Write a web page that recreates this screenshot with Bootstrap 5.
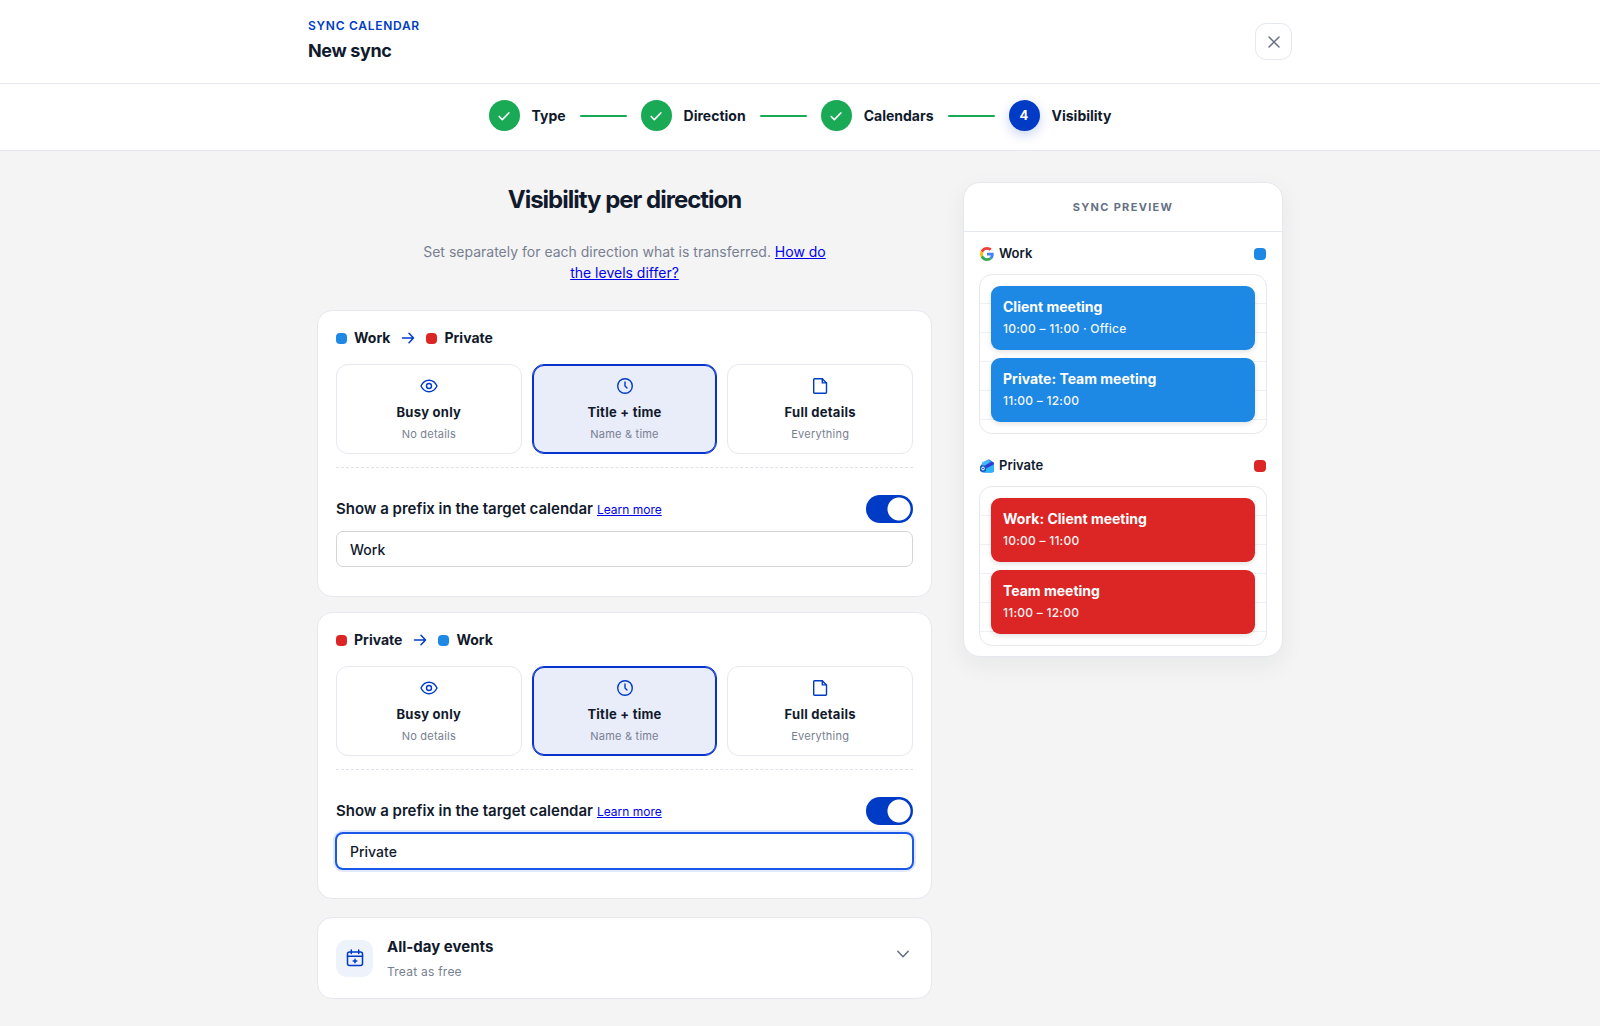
<!DOCTYPE html>
<html lang="en">
<head>
<meta charset="utf-8">
<meta name="viewport" content="width=device-width, initial-scale=1">
<title>New sync</title>
<link href="https://cdn.jsdelivr.net/npm/bootstrap@5.3.0/dist/css/bootstrap.min.css" rel="stylesheet">
<style>
  :root {
    --ink: #111a2c;
    --muted: #778091;
    --line: #e6e8ef;
    --brand: #003bc6;
    --done: #1aa955;
    --work: #1e88e5;
    --private: #dc2626;
  }
  body { font-family: Inter, "Liberation Sans", sans-serif; color: var(--ink); background: #f4f4f4; font-size: 14px; }
  svg { flex: none; display: block; }
  .stroke-icon { fill: none; stroke: currentColor; stroke-linecap: round; stroke-linejoin: round; }

  .top-inner { max-width: 1032px; padding: 18px 24px; }
  .eyebrow { color: var(--brand); font-size: 12px; line-height: 16px; font-weight: 600; letter-spacing: .06em; }
  .page-name { font-size: 18px; line-height: 28px; font-weight: 700; letter-spacing: -.02em; margin: 3px 0 0; }
  .top-bar, .step-bar { background: #fff; border-bottom: 1px solid var(--line); }
  .btn-close-x { width: 37px; height: 37px; padding: 0; border: 1px solid var(--line); border-radius: 11px; background: #fff; color: #667085; }

  .step-bar ol { padding: 16px 0 19px; }
  .step-dot { width: 31px; height: 31px; border-radius: 50%; background: var(--done); color: #fff; font-weight: 700; font-size: 13px; }
  .step-dot.now { background: var(--brand); box-shadow: 0 4px 12px rgba(0, 59, 198, .22); }
  .step-name { font-size: 14px; line-height: 20px; font-weight: 700; margin-left: 12px; }
  .step-line { width: 47px; height: 2px; border-radius: 1px; background: var(--done); margin: 0 14px; }

  .page-body { max-width: 998px; padding: 31px 16px 27px; gap: 31px; }
  .settings-col { flex: 1 1 0; min-width: 0; }
  .preview-col { flex: 0 0 320px; }
  .section-title { font-size: 24px; line-height: 36px; font-weight: 700; letter-spacing: -1px; margin: 0 0 23px; }
  .section-text { max-width: 424px; font-size: 14px; line-height: 21px; color: var(--muted); margin: 0 auto 27px; }
  .plain-link { color: #0000ee; text-decoration: underline; }

  .panel { background: #fff; border: 1px solid var(--line); border-radius: 15px; }
  .direction-panel { padding: 18px 18px 29px; margin-bottom: 15px; }
  .route { font-size: 14px; line-height: 18px; font-weight: 700; gap: 7px; margin-bottom: 17px; }
  .route svg { color: var(--brand); margin: 0 4px; }
  .swatch { width: 11px; height: 11px; border-radius: 4px; flex: none; }
  .swatch-lg { width: 12px; height: 12px; }
  .c-work { background: var(--work); }
  .c-private { background: var(--private); }

  .levels { gap: 10px; }
  .level { flex: 1 1 0; height: 90px; border: 1px solid var(--line); border-radius: 12px; cursor: pointer; padding-top: 12px; }
  .level svg { color: var(--brand); }
  .level-name, .level-info, .event-time, .all-day-info { letter-spacing: .02em; }
  .level-name { font-size: 13px; line-height: 18px; font-weight: 700; margin-top: 8px; }
  .level-info { font-size: 11px; line-height: 16px; color: var(--muted); margin-top: 5px; }
  .btn-check:checked + .level { background: #e9ecf9; border-color: #0a33cb; box-shadow: inset 0 0 0 1px #0a33cb; }
  .dashes { margin-top: 13px; border-top: 1px dashed #dfe2e8; padding-top: 27px; }
  .prefix-row { height: 28px; margin-bottom: 8px; }
  .prefix-row label { font-size: 15px; font-weight: 600; }
  .prefix-row a { font-size: 12px; }
  .form-switch .toggle { width: 47px; height: 28px; margin: 0; float: none; border: 0; border-radius: 14px;
    background: radial-gradient(circle at 33px 14px, #fff 11px, transparent 12px) var(--brand); cursor: pointer; }
  .prefix-input { height: 36px; border: 1px solid #d3d5d9; border-radius: 7px; padding: 0 13px; font-size: 14px; font-weight: 500; color: var(--ink); box-shadow: none; }
  .prefix-input.editing, .prefix-input:focus { border-color: #1a59e8; color: var(--ink); box-shadow: 0 0 0 1px #1a59e8, 0 0 0 3px rgba(26, 89, 232, .13); }

  .all-day { padding: 18px; margin-top: 18px; width: 100%; height: 82px; color: var(--ink); text-align: left; }
  .all-day-icon { width: 37px; height: 37px; border-radius: 11px; background: #edf2fb; color: var(--brand); margin-right: 14px; }
  .all-day-name { font-size: 15px; line-height: 22px; font-weight: 700; }
  .all-day-info { font-size: 12px; line-height: 18px; color: var(--muted); margin-top: 5px; }
  .all-day .chevron { color: #667085; }

  .preview { border-radius: 17px; box-shadow: 0 8px 24px rgba(17, 26, 44, .06); padding-bottom: 10px; }
  .preview-head { height: 49px; border-bottom: 1px solid var(--line); color: #667085; font-size: 11px; font-weight: 700; letter-spacing: .12em; }
  .preview-part { padding: 12px 15px 0; }
  .preview-part + .preview-part { padding-top: 22px; }
  .cal-head { height: 20px; padding: 0 1px; margin-bottom: 10px; gap: 5px; font-size: 13px; font-weight: 600; }
  .day-grid { border: 1px solid var(--line); border-radius: 13px; padding: 11px; gap: 8px;
    background: repeating-linear-gradient(#fff 0 28px, #eff0f4 28px 29px); }
  .event { height: 64px; border-radius: 9px; padding: 11px 12px; color: #fff; box-shadow: 0 2px 5px rgba(17, 26, 44, .12); }
  .event-name { font-size: 14px; line-height: 20px; font-weight: 700; }
  .event-time { font-size: 12px; line-height: 16px; font-weight: 500; margin-top: 4px; opacity: .95; }

  @media (max-width: 900px) {
    .page-body { flex-direction: column; }
    .settings-col, .preview-col { flex: none; width: 100%; }
    .step-line { width: 16px; margin: 0 6px; }
  }
</style>
</head>
<body>
<svg width="0" height="0" class="position-absolute" aria-hidden="true">
  <defs>
    <symbol id="i-check" viewBox="0 0 16 16"><path d="M2.500 8.500l3.600 3.600 7.400-7.600"/></symbol>
    <symbol id="i-eye" viewBox="0 0 18 18"><path d="M1 9C2.800 5.200 5.600 3.300 9 3.300S15.200 5.200 17 9c-1.800 3.800-4.600 5.700-8 5.700S2.800 12.800 1 9z"/><circle cx="9" cy="9" r="2.500"/></symbol>
    <symbol id="i-clock" viewBox="0 0 18 18"><circle cx="9" cy="9" r="7.300"/><path d="M9 5v4l2 2"/></symbol>
    <symbol id="i-file" viewBox="0 0 18 18"><path d="M3.500 1.700h7.800l4.200 4.200v9.600a.8.8 0 0 1-.8.800H3.500a.8.8 0 0 1-.8-.8v-13a.8.8 0 0 1 .8-.8z"/><path d="M11.300 1.700v4.200h4.200"/></symbol>
    <symbol id="i-arrow" viewBox="0 0 14 14"><path d="M1.500 7h11M8 2.300L12.500 7 8 11.700"/></symbol>
  </defs>
</svg>

<header class="top-bar">
  <div class="top-inner mx-auto d-flex justify-content-between align-items-center">
    <div>
      <div class="eyebrow">SYNC CALENDAR</div>
      <h1 class="page-name">New sync</h1>
    </div>
    <button type="button" class="btn-close-x d-flex align-items-center justify-content-center" aria-label="Close">
      <svg class="stroke-icon" width="12" height="12" viewBox="0 0 12 12" stroke-width="1.500"><path d="M1 1l10 10M11 1L1 11"/></svg>
    </button>
  </div>
</header>

<nav class="step-bar" aria-label="Steps">
  <ol class="list-unstyled m-0 d-flex justify-content-center align-items-center">
    <li class="d-flex align-items-center"><span class="step-dot d-flex align-items-center justify-content-center"><svg class="stroke-icon" width="14" height="14" stroke-width="1.800"><use href="#i-check"/></svg></span><span class="step-name">Type</span><span class="step-line"></span></li>
    <li class="d-flex align-items-center"><span class="step-dot d-flex align-items-center justify-content-center"><svg class="stroke-icon" width="14" height="14" stroke-width="1.800"><use href="#i-check"/></svg></span><span class="step-name">Direction</span><span class="step-line"></span></li>
    <li class="d-flex align-items-center"><span class="step-dot d-flex align-items-center justify-content-center"><svg class="stroke-icon" width="14" height="14" stroke-width="1.800"><use href="#i-check"/></svg></span><span class="step-name">Calendars</span><span class="step-line"></span></li>
    <li class="d-flex align-items-center" aria-current="step"><span class="step-dot now d-flex align-items-center justify-content-center">4</span><span class="step-name">Visibility</span></li>
  </ol>
</nav>

<main class="page-body mx-auto d-flex align-items-start">
  <div class="settings-col">
    <h2 class="section-title text-center">Visibility per direction</h2>
    <p class="section-text text-center">Set separately for each direction what is transferred. <a class="plain-link" href="#">How do the levels differ?</a></p>

    <section class="panel direction-panel">
      <div class="route d-flex align-items-center">
        <span class="swatch c-work"></span><span>Work</span>
        <svg class="stroke-icon" width="14" height="14" stroke-width="1.500"><use href="#i-arrow"/></svg>
        <span class="swatch c-private"></span><span>Private</span>
      </div>
      <div class="levels d-flex text-center">
        <input class="btn-check" type="radio" name="level-a" id="a-busy">
        <label class="level d-flex flex-column align-items-center" for="a-busy"><svg class="stroke-icon" width="18" height="18" stroke-width="1.400"><use href="#i-eye"/></svg><span class="level-name">Busy only</span><span class="level-info">No details</span></label>
        <input class="btn-check" type="radio" name="level-a" id="a-title" checked>
        <label class="level d-flex flex-column align-items-center" for="a-title"><svg class="stroke-icon" width="18" height="18" stroke-width="1.400"><use href="#i-clock"/></svg><span class="level-name">Title + time</span><span class="level-info">Name &amp; time</span></label>
        <input class="btn-check" type="radio" name="level-a" id="a-full">
        <label class="level d-flex flex-column align-items-center" for="a-full"><svg class="stroke-icon" width="18" height="18" stroke-width="1.400"><use href="#i-file"/></svg><span class="level-name">Full details</span><span class="level-info">Everything</span></label>
      </div>
      <div class="dashes">
        <div class="prefix-row d-flex align-items-center justify-content-between">
          <div><label for="a-switch">Show a prefix in the target calendar</label> <a class="plain-link" href="#">Learn more</a></div>
          <div class="form-switch p-0 m-0 d-flex"><input class="form-check-input toggle" type="checkbox" role="switch" id="a-switch" checked></div>
        </div>
        <input class="form-control prefix-input" type="text" value="Work" aria-label="Prefix for events from Work">
      </div>
    </section>

    <section class="panel direction-panel">
      <div class="route d-flex align-items-center">
        <span class="swatch c-private"></span><span>Private</span>
        <svg class="stroke-icon" width="14" height="14" stroke-width="1.500"><use href="#i-arrow"/></svg>
        <span class="swatch c-work"></span><span>Work</span>
      </div>
      <div class="levels d-flex text-center">
        <input class="btn-check" type="radio" name="level-b" id="b-busy">
        <label class="level d-flex flex-column align-items-center" for="b-busy"><svg class="stroke-icon" width="18" height="18" stroke-width="1.400"><use href="#i-eye"/></svg><span class="level-name">Busy only</span><span class="level-info">No details</span></label>
        <input class="btn-check" type="radio" name="level-b" id="b-title" checked>
        <label class="level d-flex flex-column align-items-center" for="b-title"><svg class="stroke-icon" width="18" height="18" stroke-width="1.400"><use href="#i-clock"/></svg><span class="level-name">Title + time</span><span class="level-info">Name &amp; time</span></label>
        <input class="btn-check" type="radio" name="level-b" id="b-full">
        <label class="level d-flex flex-column align-items-center" for="b-full"><svg class="stroke-icon" width="18" height="18" stroke-width="1.400"><use href="#i-file"/></svg><span class="level-name">Full details</span><span class="level-info">Everything</span></label>
      </div>
      <div class="dashes">
        <div class="prefix-row d-flex align-items-center justify-content-between">
          <div><label for="b-switch">Show a prefix in the target calendar</label> <a class="plain-link" href="#">Learn more</a></div>
          <div class="form-switch p-0 m-0 d-flex"><input class="form-check-input toggle" type="checkbox" role="switch" id="b-switch" checked></div>
        </div>
        <input class="form-control prefix-input editing" type="text" value="Private" aria-label="Prefix for events from Private">
      </div>
    </section>

    <button type="button" class="panel all-day d-flex align-items-center" aria-expanded="false">
      <span class="all-day-icon d-flex align-items-center justify-content-center">
        <svg class="stroke-icon" width="18" height="18" viewBox="0 0 18 18" stroke-width="1.500"><rect x="1.500" y="3" width="15" height="13.500" rx="2"/><path d="M1.500 7.300h15M5.300 1v3.500M12.700 1v3.500M9 10.200v3.600M7.200 12h3.600"/></svg>
      </span>
      <span class="d-flex flex-column flex-grow-1"><span class="all-day-name">All-day events</span><span class="all-day-info">Treat as free</span></span>
      <svg class="stroke-icon chevron mb-2 me-1" width="12" height="12" viewBox="0 0 12 12" stroke-width="1.500"><path d="M.8 3.300L6 8.700l5.200-5.400"/></svg>
    </button>
  </div>

  <aside class="preview-col">
    <div class="panel preview">
      <div class="preview-head d-flex align-items-center justify-content-center">SYNC PREVIEW</div>
      <section class="preview-part">
        <div class="cal-head d-flex align-items-center">
          <svg width="14" height="14" viewBox="0 0 48 48" aria-hidden="true"><path fill="#EA4335" d="M24 9.500c3.540 0 6.710 1.220 9.210 3.600l6.850-6.850C35.900 2.380 30.470 0 24 0 14.620 0 6.510 5.380 2.560 13.220l7.980 6.190C12.430 13.720 17.740 9.500 24 9.500z"/><path fill="#4285F4" d="M46.980 24.550c0-1.570-.15-3.090-.38-4.550H24v9.020h12.940c-.58 2.960-2.260 5.480-4.780 7.180l7.730 6c4.510-4.180 7.090-10.360 7.090-17.650z"/><path fill="#FBBC05" d="M10.530 28.590c-.48-1.450-.76-2.990-.76-4.590s.27-3.140.76-4.590l-7.980-6.190C.92 16.460 0 20.120 0 24c0 3.880.92 7.540 2.560 10.780l7.970-6.190z"/><path fill="#34A853" d="M24 48c6.480 0 11.930-2.130 15.890-5.810l-7.730-6c-2.150 1.450-4.920 2.300-8.160 2.300-6.260 0-11.570-4.220-13.470-9.910l-7.980 6.190C6.510 42.620 14.620 48 24 48z"/></svg>
          <span class="flex-grow-1">Work</span><span class="swatch swatch-lg c-work"></span>
        </div>
        <div class="day-grid d-flex flex-column">
          <div class="event c-work"><div class="event-name">Client meeting</div><div class="event-time">10:00 – 11:00 · Office</div></div>
          <div class="event c-work"><div class="event-name">Private: Team meeting</div><div class="event-time">11:00 – 12:00</div></div>
        </div>
      </section>
      <section class="preview-part">
        <div class="cal-head d-flex align-items-center">
          <svg width="14" height="14" viewBox="0 0 14 14" aria-hidden="true"><path fill="#1769e0" d="M1 6l7-5.200a1.500 1.500 0 0 1 1.700 0L13 3.200a2 2 0 0 1 1 1.700V11a2.500 2.500 0 0 1-2.500 2.500H3A2 2 0 0 1 1 11.500z"/><path fill="#42b8f5" d="M1.500 5.500L2.500 3 8.300.8 11 2.500 3.500 7.500z"/><path fill="#3b35d1" d="M5.500 6.600L12.600 2.800a2 2 0 0 1 1.400 2L7 9z"/><path fill="#2ab4fa" d="M14 5.500V11a2.500 2.500 0 0 1-2.500 2.500H4L7 9z"/><rect y="6.500" width="6" height="6" rx="1.300" fill="#155cc4"/><circle cx="3" cy="9.500" r="1.400" fill="none" stroke="#fff"/></svg>
          <span class="flex-grow-1">Private</span><span class="swatch swatch-lg c-private"></span>
        </div>
        <div class="day-grid d-flex flex-column">
          <div class="event c-private"><div class="event-name">Work: Client meeting</div><div class="event-time">10:00 – 11:00</div></div>
          <div class="event c-private"><div class="event-name">Team meeting</div><div class="event-time">11:00 – 12:00</div></div>
        </div>
      </section>
    </div>
  </aside>
</main>
<script src="https://cdn.jsdelivr.net/npm/bootstrap@5.3.0/dist/js/bootstrap.bundle.min.js"></script>
</body>
</html>
